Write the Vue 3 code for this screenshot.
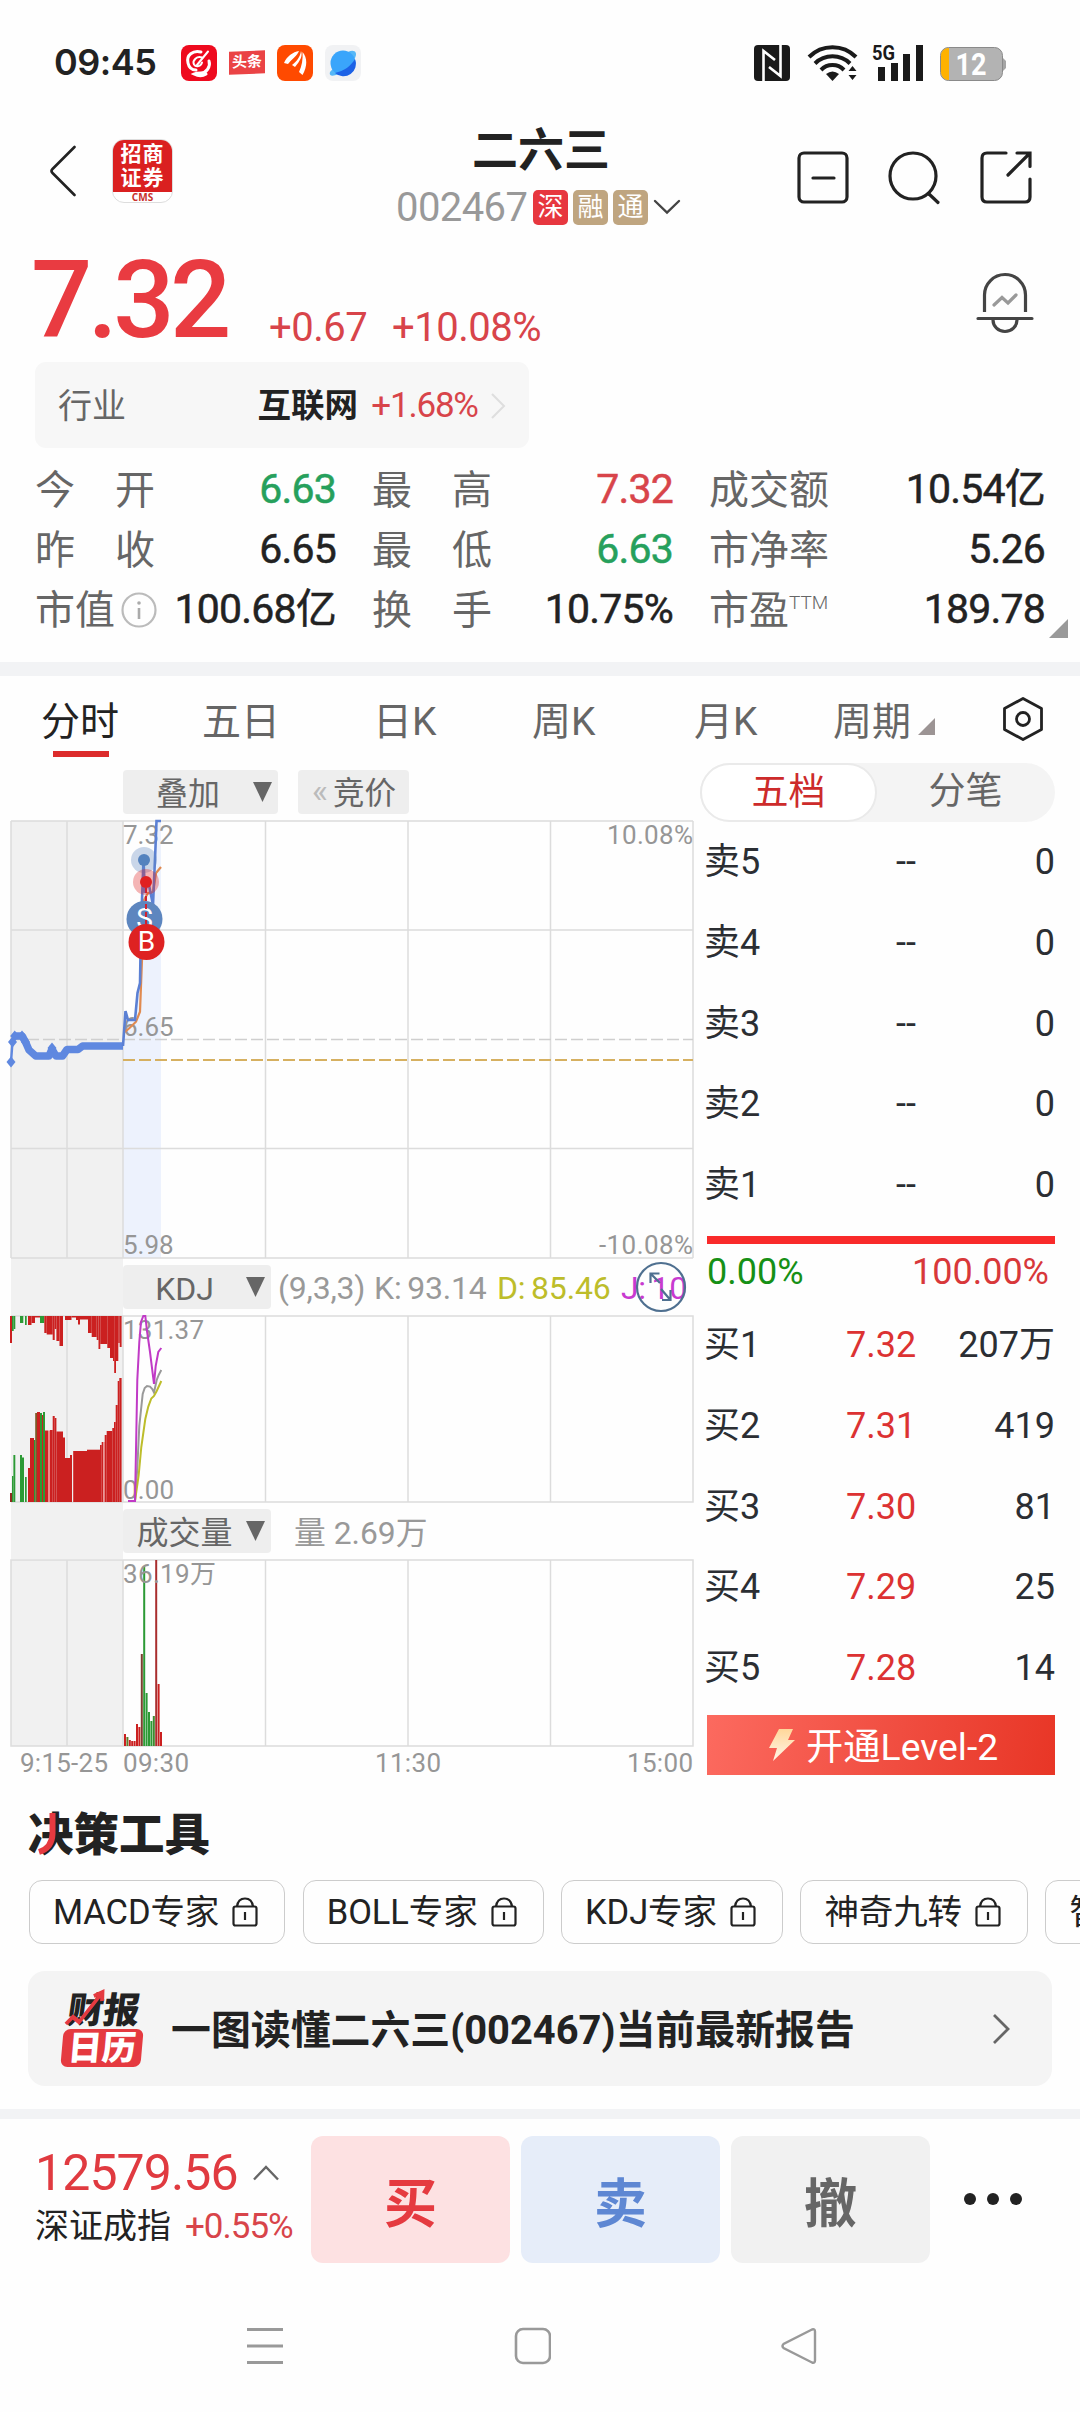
<script setup>
import { ref } from 'vue'

// 行情统计
const stats = ref([
  { label: '今开', value: '6.63', color: 'green' },
  { label: '最高', value: '7.32', color: 'red' },
  { label: '成交额', value: '10.54亿' },
  { label: '昨收', value: '6.65' },
  { label: '最低', value: '6.63', color: 'green' },
  { label: '市净率', value: '5.26' },
  { label: '市值', value: '100.68亿', info: true },
  { label: '换手', value: '10.75%' },
  { label: '市盈', value: '189.78', sup: 'TTM' }
])

const tabs = ['分时', '五日', '日K', '周K', '月K', '周期']
const activeTab = ref('分时')

// 五档盘口
const sells = ['卖5', '卖4', '卖3', '卖2', '卖1']
const buys = ref([
  { name: '买1', price: '7.32', vol: '207万' },
  { name: '买2', price: '7.31', vol: '419' },
  { name: '买3', price: '7.30', vol: '81' },
  { name: '买4', price: '7.29', vol: '25' },
  { name: '买5', price: '7.28', vol: '14' }
])

const tools = ['MACD专家', 'BOLL专家', 'KDJ专家', '神奇九转', '智能诊股']

const gridX = [265.5, 408, 550.5]

// 集合竞价柱：[起点, 终点, 高度, 颜色]
const R = '#cb2020'
const G = '#2c9a35'
const auctionBottom = [
  [10, 12, 9, '#8f2a20'], [12, 13.4, 26, G], [13.4, 15.3, 47, G], [20, 22, 47, G], [22, 24, 44.5, G],
  [25, 26.7, 25, G], [28, 30, 34, R], [30, 34, 64, R], [34, 35.2, 62, G], [35.2, 37, 89, '#7d5a28'],
  [37, 40, 90, R], [40, 42, 89, G], [42, 43, 87, R], [43, 45, 90, G], [45, 48, 71.5, R], [48, 50, 71.5, '#ee8a8a'],
  [50, 52.7, 72, R], [52.7, 54.7, 86, R], [54.7, 56.4, 84, R], [56.4, 63, 70.5, R], [63, 65, 64.5, R],
  [65, 70, 44, R], [70, 72, 47, R], [73.2, 87, 51, R], [87, 100, 52.3, R], [100, 101.7, 57, R],
  [101.7, 103.3, 60, R], [103.3, 104.7, 60, '#ee8a8a'], [104.7, 106.7, 67, R], [106.7, 112.3, 71, R],
  [112.3, 114, 74, R], [114, 115.7, 80, R], [115.7, 117.7, 97, R], [117.7, 119.3, 121, R], [119.3, 121.6, 124, R]
]
const auctionTop = [
  [10, 12, 27, R], [12, 13.7, 15, G], [13.7, 15.3, 13, G], [20, 23.3, 7, G], [25, 26.7, 9, G],
  [28, 31.5, 9, R], [31.5, 35, 7, R], [35, 40, 1.5, R], [40, 44.3, 7, G], [44.3, 46.7, 17, R], [46.7, 52.7, 18.5, R],
  [52.7, 54.7, 24, R], [54.7, 56.4, 13, R], [56.4, 59.5, 25, R], [59.5, 63, 30, R], [65, 71.5, 4, R],
  [71.5, 76, 1.5, R], [76, 78, 4, R], [78, 80, 8.5, R], [80, 88, 3.5, R], [88, 91.7, 17, R], [91.7, 96.7, 21, R],
  [96.7, 98.5, 24, R], [98.5, 100.3, 33, R], [100.3, 107.3, 28, R], [107.3, 110, 32, R],
  [110, 113, 42, R], [113, 114.2, 45, R], [114.2, 116, 57, R], [116, 118.3, 45, R], [118.3, 119.7, 27, R],
  [119.7, 121.6, 31, R]
]

// 成交量柱：[高度, 颜色]
const volumes = [
  [12, R], [9, '#5e7d2c'], [6, R], [5, R], [5, R], [22, R], [19, R], [92, '#7c4030'],
  [180, G], [53, G], [34, G], [25, G], [30, '#3e8a30'], [186, '#a92e2e'], [62, R], [14, R]
]

const auctionLine = '14.7,1036 22,1036 25.5,1042 29,1050 35.7,1056 49,1056 52,1049 56,1056 62.5,1056 67,1049.5 78,1049.5 82.6,1046 123,1046'
const diamonds = [[11, 1062], [12.5, 1042], [14.7, 1036], [22, 1036], [25.5, 1042], [52, 1048]]
const priceLine = '123,1046 125.5,1011 128,1020 135,1020 137.5,993 140,983 141,926 143.5,860 145,893 148,880 153,905 155.5,847 156.5,821 161,821'
const avgLine = '125,1032 129.5,1028 136,1021.7 140,1011.7 142,960 144,900 148,893 153,892 156,873 161,867'
</script>

<template>
  <div class="page">
    <!-- 状态栏 -->
    <div class="status">
      <span class="time">09:45</span>
      <svg class="app" width="36" height="36" viewBox="0 0 36 36">
        <rect width="36" height="36" rx="8" fill="#ee0a1e" />
        <g fill="none" stroke="#fff" stroke-linecap="round">
          <path d="M20 7C12 5 5 10 7 18c1 5 4 7 8 7" stroke-width="3" />
          <path d="M27 6.500 16 20" stroke-width="2" />
          <path d="M21 12.500c-5-2-10 3-8 7 2 3 7 2 8-2" stroke-width="2" />
          <path d="M28 16c2 6-3 12-8 12-3 0-5 0-7 1 4 2 9 2 12 0" stroke-width="3" />
        </g>
      </svg>
      <span class="toutiao"><b>头条</b></span>
      <svg class="app" width="36" height="36" viewBox="0 0 36 36">
        <rect width="36" height="36" rx="8" fill="#ff4a00" />
        <path d="M7 18C10 11 16 7 22 6c-2 5-7 8-11 13zM15 20C20 16 23 12 24 6c2 5-1 10-6 16zM22 27c3-6 4-13 3.500-20 5 6 5 14 0 23z" fill="#fff" />
      </svg>
      <svg class="app" width="36" height="36" viewBox="0 0 36 36">
        <rect width="36" height="36" rx="8" fill="#f1f2f4" />
        <path d="M5 27C3 33 12 31 19 26L30 13c3-6-1-9-7-6z" fill="#55b7f7" />
        <circle cx="18" cy="18" r="12.500" fill="#3aa5fb" />
        <path d="M30 14A12.500 12.500 0 0 1 10 28C19 26 26 21 30 14z" fill="#1d62e6" />
      </svg>
      <span class="grow"></span>
      <svg width="256" height="40" viewBox="0 0 256 40">
        <rect x="4" y="2" width="36" height="36" rx="4" fill="#1a1a1a" />
        <path d="M13.500 38V8L25 17M30.500 2V33L19 24" fill="none" stroke="#fff" stroke-width="2.600" />
        <g fill="none" stroke="#1a1a1a" stroke-width="4">
          <path d="M59 14a33 33 0 0 1 47 0" />
          <path d="M65 20.500a25 25 0 0 1 35 0" />
          <path d="M71 27a16 16 0 0 1 23 0" />
        </g>
        <path d="M76 31q6.500-5 13 0L82.500 38z" fill="#1a1a1a" />
        <path d="M98.500 28l4-5 4 5zM98.500 32l4 5 4-5z" fill="#1a1a1a" />
        <text x="122" y="17" font-size="20" font-weight="700" fill="#1a1a1a" textLength="23" lengthAdjust="spacingAndGlyphs">5G</text>
        <path d="M128 24h7v14h-7zM141 20h7v18h-7zM153 11h7v27h-7zM166 2h7v36h-7z" fill="#1a1a1a" />
        <rect x="190.500" y="4.500" width="62" height="33" rx="8" fill="#b3b3b3" stroke="#8a8a8a" />
        <path d="M198.500 5h.5v32h-.5a7.500 7.500 0 0 1-7.500-7.500v-17A7.500 7.500 0 0 1 198.500 5z" fill="#ffb200" />
        <path d="M253 15l3 3v7l-3 3z" fill="#a5a5a5" />
        <text x="221" y="32" font-size="31" font-weight="700" fill="#fff" text-anchor="middle" textLength="31" lengthAdjust="spacingAndGlyphs">12</text>
      </svg>
    </div>

    <!-- 标题栏 -->
    <header class="header">
      <svg class="back" width="28" height="54" viewBox="0 0 28 54">
        <path d="M25.500 3 3.500 25q-2 2 0 4L25.500 51" fill="none" stroke="#222" stroke-width="2.600" stroke-linecap="round" />
      </svg>
      <div class="logo">
        <div class="logo-red"><span>招商</span><span>证券</span></div>
        <div class="logo-cms">CMS</div>
      </div>
      <div class="title">
        <div class="name">二六三</div>
        <div class="code">
          <span class="num">002467</span>
          <i class="tag deep">深</i><i class="tag">融</i><i class="tag">通</i>
          <svg width="28" height="18" viewBox="0 0 28 18"><path d="M2 3l12 11.500L26 3" fill="none" stroke="#444" stroke-width="2.400" stroke-linecap="round" /></svg>
        </div>
      </div>
      <svg class="actions" width="236" height="54" viewBox="0 0 236 54" fill="none" stroke="#222" stroke-width="3.200" stroke-linecap="round">
        <rect x="2" y="2" width="48" height="49" rx="5" />
        <path d="M16 27h21" />
        <circle cx="116" cy="25" r="23" />
        <path d="M132 43l9 8.500" />
        <path d="M209 2h-19q-5 0-5 5v39q0 5 5 5h38q5 0 5-5V28M220 2h13v13.500M232 3 211 24" />
      </svg>
    </header>

    <!-- 报价 -->
    <section class="quote">
      <div class="price-row">
        <span class="price">7.32</span>
        <span class="chg">+0.67</span>
        <span class="pct">+10.08%</span>
        <svg class="bell" width="60" height="62" viewBox="0 0 60 62" fill="none" stroke="#444" stroke-width="3.200" stroke-linecap="round">
          <path d="M9.500 40V23a20.500 20.500 0 0 1 41 0v17" stroke-linecap="butt" />
          <path d="M3 46.500h54M18 48a12 11.500 0 0 0 24 0" />
          <path d="M19 33l8-7.500 6 5.500 8-8" stroke="#999" />
        </svg>
      </div>
      <div class="industry">
        <span class="ind-label">行业</span>
        <b>互联网</b>
        <span class="ind-pct">+1.68%</span>
        <svg width="16" height="28" viewBox="0 0 16 28"><path d="M2 2l12 12L2 26" fill="none" stroke="#dedede" stroke-width="2" /></svg>
      </div>
      <div class="stats">
        <div v-for="s in stats" :key="s.label" class="stat">
          <span class="stat-label" :class="{ tight: s.info || s.sup }">
            <em v-for="c in s.label" :key="c">{{ c }}</em>
            <svg v-if="s.info" class="info" width="38" height="38" viewBox="0 0 38 38">
              <circle cx="20" cy="19" r="16.500" fill="none" stroke="#bbb" stroke-width="2.200" />
              <path d="M20 17v11" stroke="#aaa" stroke-width="2.600" /><circle cx="20" cy="12" r="1.800" fill="#aaa" />
            </svg>
            <sup v-if="s.sup">{{ s.sup }}</sup>
          </span>
          <span class="stat-value" :class="s.color">{{ s.value }}</span>
        </div>
        <i class="corner"></i>
      </div>
    </section>
    <div class="divider"></div>

    <!-- 周期切换 -->
    <nav class="tabs">
      <span v-for="(t, i) in tabs" :key="t" class="tab" :class="['t' + i, { active: t === activeTab }]" @click="activeTab = t">
        {{ t }}<i v-if="t === '周期'" class="tri"></i>
      </span>
      <svg class="gear" width="42" height="46" viewBox="0 0 42 46" fill="none" stroke="#222" stroke-width="2.800">
        <path d="M21 2.500 39.500 12.500v21L21 43.500 2.500 33.500v-21z" stroke-linejoin="round" />
        <circle cx="21" cy="23" r="6.500" />
      </svg>
    </nav>

    <div class="board">
      <!-- 走势图 -->
      <div class="charts">
        <div class="row-top">
          <span class="sel wide"><em>叠加</em><i></i></span>
          <span class="bid"><small>«</small>竞价</span>
        </div>
        <svg width="700" height="443" viewBox="0 816 700 443">
          <rect x="11" y="821" width="112" height="438" fill="#f1f1f1" />
          <path d="M123 1046 125.500 1011 128 1020H135L137.500 993 140 983 141 926 143.500 860 145 893 148 880 153 905 155.500 847 156.500 821H161V1258H123z" fill="#edf2fd" />
          <g stroke="#dcdcdc" stroke-width="1.500" fill="none">
            <path d="M11 821H693M11 930H693M11 1148.500H693M11 1258H693M11 821V1258M67 821V1258M123 821V1258M693 821V1258" />
            <path v-for="x in gridX" :key="x" :d="`M${x} 821V1258`" />
          </g>
          <path d="M11 1039.500H693" stroke="#cfcfcf" stroke-width="1.300" stroke-dasharray="12 4" />
          <path d="M123 1060H693" stroke="#d6b060" stroke-width="2.200" stroke-dasharray="12 4" />
          <g class="axis">
            <text x="123" y="844">7.32</text>
            <text x="693" y="844" text-anchor="end" textLength="86">10.08%</text>
            <text x="123" y="1036">6.65</text>
            <text x="123" y="1254">5.98</text>
            <text x="693" y="1254" text-anchor="end" textLength="94">-10.08%</text>
          </g>
          <polyline :points="avgLine" fill="none" stroke="#e08a50" stroke-width="2.200" />
          <polyline :points="auctionLine" fill="none" stroke="#5f88e0" stroke-width="7.500" stroke-linejoin="round" />
          <path d="M11 1062 12.500 1042 14.700 1036" fill="none" stroke="#5f88e0" stroke-width="2.400" />
          <path v-for="d in diamonds" :key="d[0]" :d="`M${d[0]} ${d[1] - 5.5}l4.500 5.500-4.500 5.500-4.500-5.500z`" fill="#5f88e0" />
          <polyline :points="priceLine" fill="none" stroke="#5b80d4" stroke-width="2.600" />
          <circle cx="144" cy="860" r="13" fill="#5d86bf" opacity=".33" />
          <circle cx="144" cy="860" r="6" fill="#5482be" />
          <circle cx="146" cy="882" r="13" fill="#e02020" opacity=".33" />
          <circle cx="146" cy="882" r="6" fill="#e02020" />
          <circle cx="144.500" cy="919" r="18" fill="#5d86bf" />
          <text x="144.500" y="928" class="mark">S</text>
          <path d="M146 888V924" stroke="#d02030" stroke-width="2" stroke-dasharray="5 3" />
          <circle cx="146.500" cy="942" r="18" fill="#de2222" />
          <text x="146.500" y="951" class="mark">B</text>
        </svg>

        <div class="row-ind">
          <span class="sel"><em>KDJ</em><i></i></span>
          <span class="kdj">
            <span class="k1">(9,3,3)</span><span class="k2">K: 93.14</span><span class="k3">D: 85.46</span><span class="k4">J: 10</span>
          </span>
          <svg class="expand" width="52" height="52" viewBox="0 0 52 52" fill="none" stroke="#4f7090" stroke-width="2.200">
            <circle cx="26" cy="26" r="24" />
            <path d="M15.500 22V12.500h9M15.500 12.500 25 22M26 28l9 10.500M35.500 29v10H27" />
          </svg>
        </div>
        <svg width="700" height="188" viewBox="0 1315 700 188">
          <rect x="11" y="1315" width="112" height="188" fill="#f1f1f1" />
          <g stroke="#dcdcdc" stroke-width="1.500" fill="none">
            <path d="M11 1316H693V1502H11M67 1316V1502M123 1316V1502" />
            <path v-for="x in gridX" :key="x" :d="`M${x} 1316V1502`" />
          </g>
          <rect v-for="b in auctionBottom" :key="'b' + b[0]" :x="b[0]" :y="1502 - b[2]" :width="b[1] - b[0]" :height="b[2]" :fill="b[3]" />
          <rect v-for="b in auctionTop" :key="'t' + b[0]" :x="b[0]" y="1316" :width="b[1] - b[0]" :height="b[2]" :fill="b[3]" />
          <g class="axis">
            <text x="123" y="1339" textLength="81">131.37</text>
            <text x="123" y="1499" textLength="51">0.00</text>
          </g>
          <g fill="none" stroke-width="2">
            <polyline points="135,1501 137.3,1468 139.3,1426 142.7,1394 144.7,1388 147,1386 150,1386.6 152.3,1389 154,1392.5 156.7,1380 158.7,1375 161.3,1370" stroke="#999" />
            <polyline points="135,1501 138.7,1475 141.3,1447 145.3,1419 148.3,1406.6 151.3,1398.5 154,1396 156.7,1391 161.3,1381" stroke="#bdbd2a" />
            <polyline points="128,1501 135,1501 136,1450 137.3,1380 139.3,1342 141,1322 143.3,1316 145.3,1316 147,1331 150,1352 154,1384 155.7,1366 158.3,1352 161.3,1348" stroke="#c03ac6" />
          </g>
        </svg>

        <div class="row-ind">
          <span class="sel"><em>成交量</em><i></i></span>
          <span class="vol">量 2.69万</span>
        </div>
        <svg width="700" height="228" viewBox="0 1559 700 228">
          <rect x="11" y="1560" width="112" height="186" fill="#f1f1f1" />
          <g stroke="#dcdcdc" stroke-width="1.500" fill="none">
            <path d="M11 1560H693V1746H11zM67 1560V1746M123 1560V1746" />
            <path v-for="x in gridX" :key="x" :d="`M${x} 1560V1746`" />
          </g>
          <rect v-for="(v, i) in volumes" :key="i" :x="124 + i * 2.4" :y="1746 - v[0]" width="2" :height="v[0]" :fill="v[1]" />
          <g class="axis">
            <text x="123" y="1583" textLength="93">36.19万</text>
            <text x="20" y="1772" textLength="88">9:15-25</text>
            <text x="123" y="1772" textLength="66">09:30</text>
            <text x="408" y="1772" text-anchor="middle" textLength="66">11:30</text>
            <text x="693" y="1772" text-anchor="end" textLength="66">15:00</text>
          </g>
        </svg>
      </div>

      <!-- 盘口 -->
      <div class="depth">
        <div class="switch"><span class="on">五档</span><span>分笔</span></div>
        <div class="sells">
          <div v-for="s in sells" :key="s" class="lv"><span>{{ s }}</span><span class="p dash">--</span><span>0</span></div>
        </div>
        <div class="ratio-bar"></div>
        <div class="ratio"><span class="lo">0.00%</span><span class="hi">100.00%</span></div>
        <div class="buys">
          <div v-for="b in buys" :key="b.name" class="lv"><span>{{ b.name }}</span><span class="p">{{ b.price }}</span><span>{{ b.vol }}</span></div>
        </div>
        <div class="level2">
          <svg width="28" height="32" viewBox="0 0 28 32">
            <defs><linearGradient id="bolt" x1="0" y1="0" x2="0" y2="1"><stop offset="0" stop-color="#ffd79a" /><stop offset="1" stop-color="#fff6ea" /></linearGradient></defs>
            <path d="M11 0h14l-5 11h7L5 32l4-13H1z" fill="url(#bolt)" />
          </svg>
          <span>开通Level-2</span>
        </div>
      </div>
    </div>

    <!-- 决策工具 -->
    <section class="tools">
      <h3>决策工具
        <svg class="slash" width="22" height="44" viewBox="0 0 22 44"><path d="M15.500 1V22Q15 36 2 40" fill="none" stroke="#e53a40" stroke-width="6" /></svg>
      </h3>
      <div class="chips">
        <span v-for="t in tools" :key="t" class="chip">{{ t }}
          <svg width="26" height="30" viewBox="0 0 26 30" fill="none" stroke="#222" stroke-width="2.200">
            <rect x="1.500" y="9.500" width="23" height="19" rx="2" />
            <path d="M5 9.500Q6 1.500 13 1.500T21 9.500M13 15v8" />
          </svg>
        </span>
      </div>
      <div class="report">
        <div class="cal">
          <div class="cal-top">财报
            <svg width="42" height="40" viewBox="0 0 42 40"><path d="M2 36l6-7 7 5L33 6M26 8l8-4 1 9" fill="none" stroke="#e53a40" stroke-width="4" /></svg>
          </div>
          <div class="cal-bot"><span>日历</span></div>
        </div>
        <b>一图读懂二六三(002467)当前最新报告</b>
        <svg width="20" height="32" viewBox="0 0 20 32"><path d="M3 2l14 14L3 30" fill="none" stroke="#666" stroke-width="2.800" /></svg>
      </div>
    </section>
    <div class="divider thin"></div>

    <!-- 底部交易栏 -->
    <footer class="trade">
      <div class="index">
        <div class="idx-num">12579.56
          <svg width="28" height="18" viewBox="0 0 28 18"><path d="M2 15.500 14 3l12 12.500" fill="none" stroke="#666" stroke-width="2.400" /></svg>
        </div>
        <div class="idx-name">深证成指<span>+0.55%</span></div>
      </div>
      <button class="btn buy">买</button>
      <button class="btn sell">卖</button>
      <button class="btn cancel">撤</button>
      <div class="dots"><i></i><i></i><i></i></div>
    </footer>

    <div class="sysnav">
      <svg width="38" height="38" viewBox="0 0 38 38" stroke="#999" stroke-width="3"><path d="M1 2.500h36M1 19h36M1 35.500h36" /></svg>
      <svg width="38" height="38" viewBox="0 0 38 38"><rect x="3" y="2" width="34" height="34" rx="7" fill="none" stroke="#999" stroke-width="2.600" /></svg>
      <svg width="38" height="38" viewBox="0 0 38 38"><path d="M32 2.500 3.500 17q-2 2 0 4L32 35.500q3 1 3-2v-29q0-3-3-2z" fill="none" stroke="#999" stroke-width="2.400" /></svg>
    </div>
  </div>
</template>

<style>
body { background: #fefefe; }
</style>

<style scoped>
.page {
  width: 1080px; height: 2412px; overflow: hidden; background: #fefefe; color: #222;
  font-family: Roboto, "Noto Sans CJK SC", sans-serif; display: flex; flex-direction: column;
}
.page > * { flex: none; box-sizing: border-box; }
svg { display: block; flex: none; }
i, em { font-style: normal; }
.red { color: #d8444a; }
.green { color: #26a05c; }

.status { height: 110px; padding: 15px 74px 0 54px; display: flex; align-items: center; }
.time { font-family: Inter, sans-serif; font-weight: 600; font-size: 36px; width: 127px; line-height: 38px; padding-bottom: 2px; letter-spacing: -.5px; }
.app { margin-right: 12px; }
.toutiao {
  width: 36px; height: 23px; background: #ea4345; color: #fff; margin-right: 12px; line-height: 22px;
  text-align: center; transform: skewY(-2deg); white-space: nowrap;
}
.toutiao b { font-size: 15px; }
.grow { flex: 1; }

.header { height: 130px; display: flex; padding-left: 49px; }
.back { margin-top: 34px; }
.logo { width: 61px; height: 64px; margin: 29px 0 0 35px; border-radius: 12px; overflow: hidden; border: 1px solid #ddd; box-sizing: border-box; background: #fff; }
.logo-red { background: #da2020; color: #fff; height: 53px; display: flex; flex-direction: column; align-items: center; font-weight: 700; font-size: 21px; line-height: 24px; letter-spacing: 1px; margin: -1px; padding-top: 3px; box-sizing: border-box; }
.logo-cms { font: 700 10px/12px "Noto Sans", sans-serif; color: #c8322c; text-align: center; }
.title { width: 292px; margin-left: 222px; }
.name { font-size: 46px; font-weight: 700; line-height: 56px; margin-top: 12px; text-align: center; }
.code { display: flex; align-items: center; height: 44px; margin-top: 7px; }
.num { font-size: 40px; color: #999; line-height: 46px; letter-spacing: -.6px; width: 137px; margin-left: 1px; padding-top: 2px; white-space: nowrap; }
.tag { width: 35px; height: 35px; border-radius: 5px; background: #bfa580; color: #fff; font-size: 26px; line-height: 34px; text-align: center; margin-right: 5px; flex: none; }
.tag.deep { background: #e7373f; }
.actions { margin: 41px 0 0 110px; }

.quote { height: 422px; }
.price-row { height: 122px; display: flex; padding-left: 31px; color: #e93b41; }
.price { font-size: 108px; font-weight: 500; line-height: 120px; width: 238px; letter-spacing: -4.600px; }
.chg, .pct { font-size: 40px; line-height: 48px; padding-top: 64px; color: #d8444a; letter-spacing: -.5px; }
.chg { width: 123px; }
.bell { margin: 32px 0 0 auto; margin-right: 45px; }
.industry { width: 494px; height: 86px; box-sizing: border-box; margin-left: 35px; background: #f7f7f7; border-radius: 11px; display: flex; align-items: center; padding: 2px 23px 0; font-size: 34px; line-height: 50px; }
.ind-label { color: #666; width: 200px; }
.industry b { width: 114px; font-size: 33.500px; }
.ind-pct { color: #d8444a; font-size: 35px; width: 119px; letter-spacing: -1.200px; }
.stats { display: grid; grid-template-columns: 301px 301px 336px; column-gap: 36px; padding: 12px 0 0 35px; position: relative; }
.stat { height: 60px; display: flex; justify-content: space-between; line-height: 59px; font-size: 40px; }
.stat-label { color: #666; width: 120px; display: flex; justify-content: space-between; align-items: center; }
.stat-label.tight { justify-content: flex-start; }
.info { margin-left: 4px; }
.stat-label sup { font-size: 19px; font-weight: 300; align-self: flex-start; line-height: 46px; margin-left: 0; }
.stat-value { font-size: 41px; white-space: nowrap; letter-spacing: -.8px; -webkit-text-stroke: .5px currentColor; }
.corner { position: absolute; right: 12px; bottom: 2px; width: 19px; height: 19px; background: #999; clip-path: polygon(100% 0, 100% 100%, 0 100%); }
.divider { height: 14px; background: #f2f3f5; }
.divider.thin { height: 10px; }

.tabs { height: 81px; display: flex; font-size: 39px; line-height: 92px; color: #666; padding-left: 41px; }
.tab { position: relative; white-space: nowrap; box-sizing: border-box; }
.t0 { width: 161px; } .t1 { width: 171px; } .t2 { width: 159px; } .t3 { width: 162px; } .t4 { width: 139px; } .t5 { width: 169px; }
.tab.active { color: #222; }
.tab.active::after { content: ''; position: absolute; left: 12px; bottom: 0; width: 56px; height: 6px; background: #dc2b2b; }
.tri { display: inline-block; width: 17px; height: 17px; margin-left: 7px; background: #9c9494; clip-path: polygon(100% 0, 100% 100%, 0 100%); }
.gear { margin-top: 20px; }

.board { height: 1030px; display: flex; }
.charts { width: 700px; }
.row-top { height: 59px; padding: 13px 0 0 123px; box-sizing: border-box; display: flex; gap: 20px; }
.sel { width: 148px; height: 44px; background: #eee; border-radius: 4px; display: flex; align-items: center; color: #666; font-size: 32px; line-height: 44px; flex: none; }
.sel em { width: 123px; text-align: center; padding-top: 3px; }
.sel i { width: 19px; height: 20px; background: #666; clip-path: polygon(0 0, 100% 0, 50% 100%); }
.wide { width: 155px; }
.wide em { width: 130px; }
.bid { width: 111px; height: 44px; background: #eee; border-radius: 4px; color: #666; font-size: 31.500px; line-height: 47px; box-sizing: border-box; padding-left: 14px; display: flex; }
.bid small { font-size: 34px; color: #bbb; width: 21px; line-height: 41px; }
.row-ind { height: 56px; margin-left: 11px; border-left: 112px solid #f1f1f1; display: flex; padding-top: 6px; box-sizing: border-box; position: relative; }
.kdj { display: flex; margin-left: 7px; font-size: 32px; line-height: 47px; color: #999; white-space: nowrap; letter-spacing: -.2px; word-spacing: -2px; }
.k1 { width: 96px; } .k2 { width: 123px; } .k3 { width: 124px; color: #bdbd2a; } .k4 { color: #c83ad0; letter-spacing: -.3px; }
.expand { position: absolute; left: 512px; top: 2px; }
.vol { font-size: 31.800px; line-height: 48px; color: #999; margin-left: 23px; }
.axis { font-size: 26px; fill: #969696; }
.mark { font-size: 28px; fill: #fff; text-anchor: middle; }

.depth { width: 355px; display: flex; flex-direction: column; font-size: 36px; color: #2b2e33; }
.switch { height: 59px; margin-top: 6px; border-radius: 30px; background: #f4f4f4; display: flex; font-size: 37px; line-height: 58px; text-align: center; color: #666; }
.switch span { width: 177px; }
.switch .on { background: #fff; border: 2px solid #eaeaea; box-sizing: border-box; border-radius: 30px; color: #cd2b2b; line-height: 55px; }
.sells { padding: 0 0 0 4px; }
.lv { height: 80.800px; line-height: 80px; display: flex; justify-content: space-between; position: relative; }
.p { position: absolute; left: 142px; color: #dc3232; }
.dash { left: 192px; color: #2b2e33; }
.ratio-bar { height: 8px; background: #f92a2a; margin: 10px 0 0 7px; }
.ratio { display: flex; justify-content: space-between; padding: 0 6px 0 7px; line-height: 57px; height: 61px; }
.lo { color: #169016; }
.hi { color: #d8383a; }
.buys { padding: 0 0 0 4px; }
.level2 { margin: 6px 0 0 7px; height: 60px; background: linear-gradient(100deg, #fc6a5f, #f04d40 55%, #e83626); color: #fff; font-size: 37.300px; line-height: 60px; display: flex; align-items: center; padding-left: 61px; gap: 10px; }
.level2 span { padding-top: 4px; }

.tools { height: 322px; }
h3 { font-size: 45.500px; font-weight: 900; margin: 0 0 0 28px; line-height: 66px; padding-top: 16px; height: 93px; box-sizing: border-box; position: relative; }
.slash { position: absolute; left: 9px; top: 25px; }
.chips { display: flex; gap: 17.500px; padding-left: 29px; }
.chip { flex: none; height: 64px; box-sizing: border-box; border: 1px solid #ccc; border-radius: 13px; padding: 0 26px 0 23px; font-size: 34.500px; line-height: 65px; display: flex; align-items: center; gap: 13px; white-space: nowrap; letter-spacing: -.1px; }
.report { margin: 27px 28px 0; height: 115px; background: #f4f4f4; border-radius: 17px; display: flex; align-items: center; padding: 0 41px 0 34px; }
.cal { width: 109px; }
.cal-top { font-size: 36px; font-weight: 900; line-height: 36px; transform: skewX(-8deg); position: relative; padding-left: 6px; height: 36px; padding-top: 2px; box-sizing: border-box; }
.cal-top svg { position: absolute; left: 4px; top: -3px; }
.cal-bot { width: 80px; height: 38px; background: #e53a40; border-radius: 7px; color: #fff; font-size: 34px; font-weight: 900; line-height: 38px; text-align: center; transform: skewX(-5deg); margin-top: 2px; }
.report b { font-size: 39.900px; flex: 1; line-height: 60px; white-space: nowrap; padding-top: 4px; }

.trade { height: 171px; display: flex; padding: 17px 0 0 35px; }
.index { width: 276px; white-space: nowrap; }
.idx-num { font-size: 50px; color: #e03a40; line-height: 60px; margin-top: 7px; letter-spacing: -.9px; display: flex; align-items: center; gap: 14px; }
.idx-name { font-size: 34px; line-height: 46px; color: #222; }
.idx-name span { color: #d8444a; margin-left: 14px; font-size: 35px; letter-spacing: -1px; }
.btn { width: 199px; height: 127px; border: 0; border-radius: 12px; margin-right: 11px; font: 700 53px/120px Roboto, "Noto Sans CJK SC", sans-serif; padding: 11px 0 0; display: flex; align-items: center; justify-content: center; box-sizing: border-box; }
.buy { background: #fde1e2; color: #e53a40; }
.sell { background: #e6edf9; color: #5e87d3; }
.cancel { background: #f1f1f1; color: #666; }
.dots { display: flex; gap: 11px; padding: 57px 0 0 23px; }
.dots i { width: 12px; height: 12px; border-radius: 50%; background: #222; }
.sysnav { height: 122px; display: flex; padding: 37px 0 0 246px; gap: 229px; }
</style>
